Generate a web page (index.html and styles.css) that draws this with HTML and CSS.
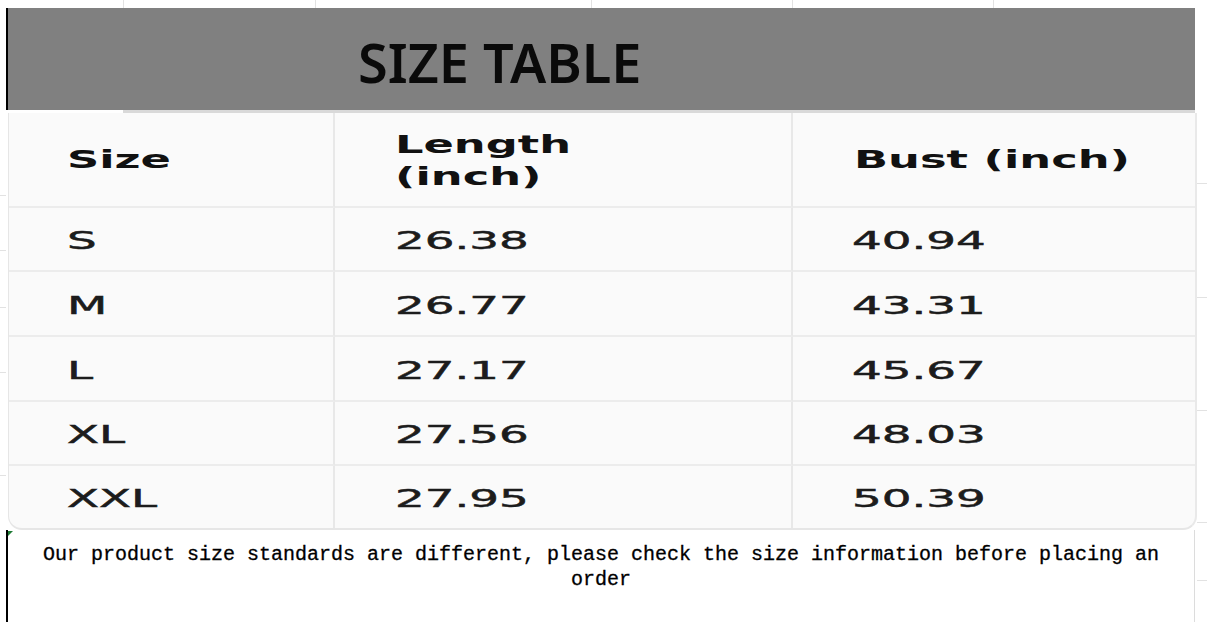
FILE: index.html
```html
<!DOCTYPE html>
<html lang="en">
<head>
<meta charset="utf-8">
<title>Size Table</title>
<link rel="stylesheet" href="styles.css">
</head>
<body>
<div class="sheet">
  <div class="banner"><h1 class="title">SIZE TABLE</h1></div>
  <div class="strip"></div>
  <div class="card">
    <div class="cell head c1"><span class="t">Size</span></div>
    <div class="cell head c2"><span class="t two">Length<br>(inch)</span></div>
    <div class="cell head c3"><span class="t">Bust (inch)</span></div>

    <div class="cell c1"><span class="d">S</span></div>
    <div class="cell c2"><span class="d">26.38</span></div>
    <div class="cell c3"><span class="d">40.94</span></div>

    <div class="cell c1"><span class="d">M</span></div>
    <div class="cell c2"><span class="d">26.77</span></div>
    <div class="cell c3"><span class="d">43.31</span></div>

    <div class="cell c1"><span class="d">L</span></div>
    <div class="cell c2"><span class="d">27.17</span></div>
    <div class="cell c3"><span class="d">45.67</span></div>

    <div class="cell c1"><span class="d">XL</span></div>
    <div class="cell c2"><span class="d">27.56</span></div>
    <div class="cell c3"><span class="d">48.03</span></div>

    <div class="cell c1 last"><span class="d">XXL</span></div>
    <div class="cell c2 last"><span class="d">27.95</span></div>
    <div class="cell c3 last"><span class="d">50.39</span></div>
  </div>
  <div class="note">
    <span class="marker"></span>
    <p class="note-text">Our product size standards are different, please check the size information before placing an order</p>
  </div>
</div>
</body>
</html>
```

FILE: styles.css
```css
html, body {
  margin: 0;
  padding: 0;
}
body {
  width: 1207px;
  height: 622px;
  overflow: hidden;
  background-color: #ffffff;
  background-image:
    linear-gradient(#e2e2e2, #e2e2e2),
    linear-gradient(#e2e2e2, #e2e2e2),
    linear-gradient(#e2e2e2, #e2e2e2),
    linear-gradient(#e2e2e2, #e2e2e2),
    linear-gradient(#e2e2e2, #e2e2e2),
    linear-gradient(#e2e2e2, #e2e2e2),
    linear-gradient(#e2e2e2, #e2e2e2),
    linear-gradient(#e2e2e2, #e2e2e2),
    linear-gradient(#e2e2e2, #e2e2e2),
    linear-gradient(#e2e2e2, #e2e2e2),
    linear-gradient(#e2e2e2, #e2e2e2),
    linear-gradient(#e2e2e2, #e2e2e2),
    linear-gradient(#e2e2e2, #e2e2e2),
    linear-gradient(#e2e2e2, #e2e2e2),
    linear-gradient(#e2e2e2, #e2e2e2);
  background-repeat: no-repeat;
  background-size:
    1px 8px, 1px 8px, 1px 8px, 1px 8px, 1px 8px,
    6px 1px, 6px 1px, 6px 1px, 6px 1px, 6px 1px,
    10px 1px, 10px 1px, 10px 1px, 10px 1px, 10px 1px;
  background-position:
    123px 0, 315px 0, 591px 0, 792px 0, 993px 0,
    0 195px, 0 250px, 0 307px, 0 372px, 0 475px,
    1197px 183px, 1197px 297px, 1197px 410px, 1197px 522px, 1197px 580px;
}

.sheet {
  padding: 8px 0 0 6px;
  width: 1191px;
}

.banner {
  box-sizing: border-box;
  height: 102px;
  width: 1189px;
  background: #808080;
  border-left: 2px solid #000;
  padding: 27px 0 0 350px;
}
.title {
  margin: 0;
  font-family: "Noto Sans", "Open Sans", sans-serif;
  font-weight: 600;
  font-size: 54px;
  line-height: 1;
  color: #0a0a0a;
}

.strip {
  height: 3px;
  margin-left: 117px;
  width: 1072px;
  background: #d9d9d9;
}

.card {
  margin-left: 2px;
  width: 1189px;
  height: 417px;
  box-sizing: border-box;
  background: #fafafa;
  border-left: 1px solid #e6e6e6;
  border-right: 2px solid #e9e9e9;
  border-bottom: 2px solid #e6e6e6;
  border-radius: 0 0 14px 14px;
  display: grid;
  grid-template-columns: 326px 458px 1fr;
  grid-template-rows: 95px 64px 65px 65px 64px 1fr;
  overflow: hidden;
}

.cell {
  display: flex;
  align-items: center;
  border-bottom: 2px solid #ececec;
  box-sizing: border-box;
  white-space: nowrap;
  padding-top: 3px;
}
.cell.head {
  padding-top: 1px;
}
.cell.last {
  border-bottom: none;
}
.c1 {
  padding-left: 58px;
  border-right: 2px solid #e8e8e8;
}
.c2 {
  padding-left: 60px;
  border-right: 2px solid #e8e8e8;
}
.c3 {
  padding-left: 59px;
}
.head.c3 {
  padding-left: 61px;
}

.t {
  display: inline-block;
  font-family: "DejaVu Sans", Verdana, sans-serif;
  font-weight: bold;
  font-size: 25px;
  color: #111;
  transform: scaleX(1.79);
  transform-origin: left center;
  line-height: 32px;
}
.t.two {
  margin-top: 2px;
}

.d {
  display: inline-block;
  font-family: "DejaVu Sans", Verdana, sans-serif;
  font-weight: normal;
  font-size: 25px;
  color: #1c1c1c;
  transform: scaleX(1.87);
  transform-origin: left center;
  -webkit-text-stroke: 0.5px #1c1c1c;
}

.note {
  position: relative;
  box-sizing: border-box;
  width: 1189px;
  height: 92px;
  border-left: 2px solid #000;
  border-right: 1px solid #dcdcdc;
  padding-top: 12px;
}
.marker {
  position: absolute;
  left: 0;
  top: 1px;
  width: 0;
  height: 0;
  border-top: 5px solid #1e7b34;
  border-right: 5px solid transparent;
}
.note-text {
  margin: 0;
  text-align: center;
  font-family: "Liberation Mono", "Courier New", monospace;
  font-size: 20px;
  line-height: 25px;
  color: #000;
  padding: 0 30px;
  -webkit-text-stroke: 0.3px #000;
}
```
